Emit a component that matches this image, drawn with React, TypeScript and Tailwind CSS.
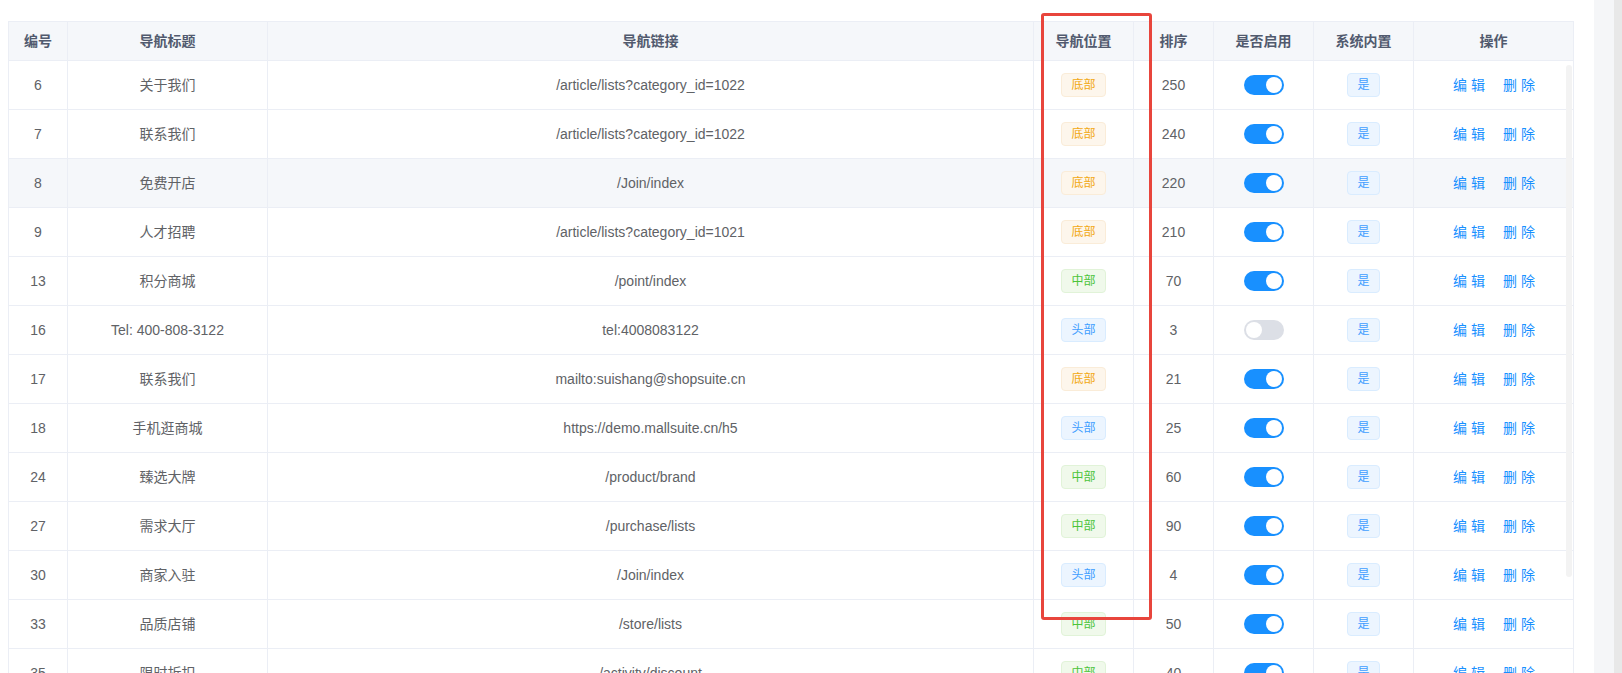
import React from 'react'

type Pos = 'bottom' | 'middle' | 'top'

type NavRow = {
  id: number
  title: string
  url: string
  pos: Pos
  sort: number
  enabled: boolean
}

const rows: NavRow[] = [
  { id: 6, title: '关于我们', url: '/article/lists?category_id=1022', pos: 'bottom', sort: 250, enabled: true },
  { id: 7, title: '联系我们', url: '/article/lists?category_id=1022', pos: 'bottom', sort: 240, enabled: true },
  { id: 8, title: '免费开店', url: '/Join/index', pos: 'bottom', sort: 220, enabled: true },
  { id: 9, title: '人才招聘', url: '/article/lists?category_id=1021', pos: 'bottom', sort: 210, enabled: true },
  { id: 13, title: '积分商城', url: '/point/index', pos: 'middle', sort: 70, enabled: true },
  { id: 16, title: 'Tel: 400-808-3122', url: 'tel:4008083122', pos: 'top', sort: 3, enabled: false },
  { id: 17, title: '联系我们', url: 'mailto:suishang@shopsuite.cn', pos: 'bottom', sort: 21, enabled: true },
  { id: 18, title: '手机逛商城', url: 'https://demo.mallsuite.cn/h5', pos: 'top', sort: 25, enabled: true },
  { id: 24, title: '臻选大牌', url: '/product/brand', pos: 'middle', sort: 60, enabled: true },
  { id: 27, title: '需求大厅', url: '/purchase/lists', pos: 'middle', sort: 90, enabled: true },
  { id: 30, title: '商家入驻', url: '/Join/index', pos: 'top', sort: 4, enabled: true },
  { id: 33, title: '品质店铺', url: '/store/lists', pos: 'middle', sort: 50, enabled: true },
  { id: 35, title: '限时折扣', url: '/activity/discount', pos: 'middle', sort: 40, enabled: true },
]

const headers = ['编号', '导航标题', '导航链接', '导航位置', '排序', '是否启用', '系统内置', '操作']

const PosTag = ({ pos }: { pos: Pos }) => {
  if (pos === 'bottom') {
    return (
      <span className="inline-flex h-6 items-center rounded border border-[#faecd8] bg-[#fdf6ec] px-[9px] text-xs text-[#f2a812]">
        底部
      </span>
    )
  }
  if (pos === 'middle') {
    return (
      <span className="inline-flex h-6 items-center rounded border border-[#e1f3d8] bg-[#f0f9eb] px-[9px] text-xs text-[#4cc43a]">
        中部
      </span>
    )
  }
  return (
    <span className="inline-flex h-6 items-center rounded border border-[#d9ecff] bg-[#ecf5ff] px-[9px] text-xs text-[#409eff]">
      头部
    </span>
  )
}

const Switch = ({ on }: { on: boolean }) => (
  <span
    className={
      on
        ? 'flex h-5 w-10 items-center justify-end rounded-full bg-[#1890ff] px-[2px]'
        : 'flex h-5 w-10 items-center justify-start rounded-full bg-[#dcdfe6] px-[2px]'
    }
  >
    <span className="h-4 w-4 rounded-full bg-white" />
  </span>
)

const Cell = ({ children, className = '' }: { children?: React.ReactNode; className?: string }) => (
  <div className={`flex items-center justify-center border-r border-b border-[#ebeef5] ${className}`}>{children}</div>
)

export default function App() {
  return (
    <div
      className="flex h-[673px] w-full overflow-hidden bg-white text-sm text-[#606266]"
      style={{ fontFamily: '"Liberation Sans", "Noto Sans CJK SC", sans-serif' }}
    >
      <div className="relative w-[1594px] shrink-0 pl-2 pt-[21px]">
        <div className="relative w-[1566px] border-l border-t border-[#ebeef5]">
          <div className="grid grid-cols-[59px_200px_766px_100px_80px_100px_100px_160px]">
            {headers.map((h) => (
              <Cell key={h} className="h-[39px] bg-[#f5f7fa] font-bold text-[#515a6e]">
                {h}
              </Cell>
            ))}
            {rows.map((r, i) => {
              const bg = i === 2 ? 'h-[49px] bg-[#f5f7fa]' : 'h-[49px]'
              return (
                <React.Fragment key={r.id + '-' + i}>
                  <Cell className={bg}>{r.id}</Cell>
                  <Cell className={bg}>{r.title}</Cell>
                  <Cell className={bg}>{r.url}</Cell>
                  <Cell className={bg}>
                    <PosTag pos={r.pos} />
                  </Cell>
                  <Cell className={bg}>{r.sort}</Cell>
                  <Cell className={bg}>
                    <Switch on={r.enabled} />
                  </Cell>
                  <Cell className={bg}>
                    <span className="inline-flex h-6 items-center rounded border border-[#d9ecff] bg-[#ecf5ff] px-[9px] text-xs text-[#409eff]">
                      是
                    </span>
                  </Cell>
                  <Cell className={bg}>
                    <div className="flex gap-[18px] pl-px text-[#1890ff]">
                      <span>编 辑</span>
                      <span>删 除</span>
                    </div>
                  </Cell>
                </React.Fragment>
              )
            })}
          </div>
          {/* body scrollbar thumb */}
          <div className="absolute left-[1557px] top-[43px] h-[512px] w-[6px] rounded-full bg-[#f3f3f3]" />
        </div>
        {/* highlight box around the position column */}
        <div className="absolute left-[1041px] top-[13px] h-[607px] w-[111px] rounded-[3px] border-[3px] border-[#e8453c]" />
      </div>
      <div className="h-full w-5 shrink-0 bg-[#f5f6f8]" />
      <div className="h-full flex-1 bg-[#e8e8e8]" />
    </div>
  )
}
